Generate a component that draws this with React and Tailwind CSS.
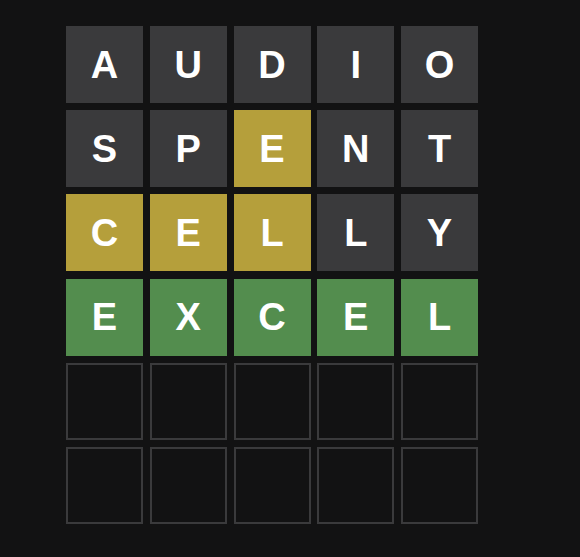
import React from "react";

const rows = [
  [["A", "gray"], ["U", "gray"], ["D", "gray"], ["I", "gray"], ["O", "gray"]],
  [["S", "gray"], ["P", "gray"], ["E", "yellow"], ["N", "gray"], ["T", "gray"]],
  [["C", "yellow"], ["E", "yellow"], ["L", "yellow"], ["L", "gray"], ["Y", "gray"]],
  [["E", "green"], ["X", "green"], ["C", "green"], ["E", "green"], ["L", "green"]],
  [["", "empty"], ["", "empty"], ["", "empty"], ["", "empty"], ["", "empty"]],
  [["", "empty"], ["", "empty"], ["", "empty"], ["", "empty"], ["", "empty"]],
];

const tileStyles = {
  gray: "bg-[#3a3a3c]",
  yellow: "bg-[#b59f3b]",
  green: "bg-[#538d4e]",
  empty: "border-2 border-[#3a3a3c]",
};

const Tile = ({ letter, state }) => (
  <div
    className={`flex items-center justify-center text-white font-bold text-[38px] leading-none ${tileStyles[state]}`}
  >
    {letter}
  </div>
);

export default function App() {
  return (
    <div
      className="w-[580px] h-[557px] bg-[#121213] pt-[26px] pl-[66px]"
      style={{ fontFamily: '"Liberation Sans", Arial, sans-serif' }}
    >
      <div className="grid grid-cols-5 grid-rows-6 w-[412px] h-[498px] gap-x-[6.75px] gap-y-[7.2px]">
        {rows.map((row, r) =>
          row.map(([letter, state], c) => (
            <Tile key={`${r}-${c}`} letter={letter} state={state} />
          ))
        )}
      </div>
    </div>
  );
}
